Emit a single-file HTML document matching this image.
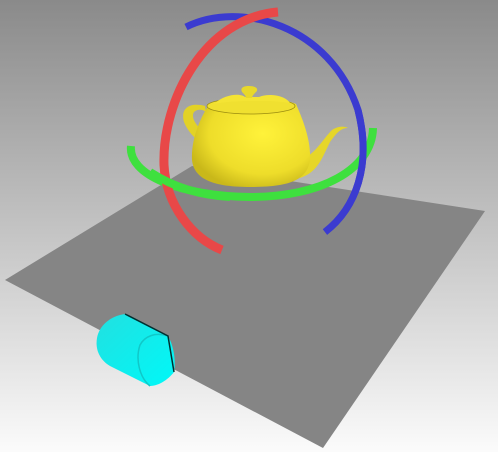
<!DOCTYPE html>
<html><head><style>
html,body{margin:0;padding:0;width:498px;height:452px;overflow:hidden}
</style></head><body>
<svg width="498" height="452" viewBox="0 0 498 452" xmlns="http://www.w3.org/2000/svg">
<defs>
<linearGradient id="bg" x1="0" y1="0" x2="0" y2="1">
<stop offset="0" stop-color="#8a8a8a"/><stop offset="1" stop-color="#fbfbfb"/>
</linearGradient>
<radialGradient id="tp" cx="0.6" cy="0.4" r="0.65">
<stop offset="0" stop-color="#fff23a"/><stop offset="0.7" stop-color="#eedd2a"/><stop offset="1" stop-color="#c9b81a"/>
</radialGradient>
<linearGradient id="cy" x1="0" y1="0" x2="1" y2="1">
<stop offset="0" stop-color="#22e0e0"/><stop offset="1" stop-color="#00f8f8"/>
</linearGradient>
</defs>
<rect width="498" height="452" fill="url(#bg)"/>
<polygon points="5,280 192,166 485,211 323,448" fill="#858585"/>
<!-- blue ring -->
<path d="M186 27 C240 0 330 25 358 110 C372 165 356 208 325 232" fill="none" stroke="#3b3bd0" stroke-width="7"/>
<!-- teapot -->
<path d="M205 106 C190 102 180 108 184 122 C188 132 196 140 202 143 L206 134 C198 128 190 118 194 112 C198 108 204 110 206 112 Z" fill="#e2d226"/>
<path d="M300 160 C315 155 322 140 332 130 C338 126 344 126 348 128 C340 128 336 134 330 142 C322 158 318 172 300 178 Z" fill="#e6d628"/>
<path d="M208 106 C198 122 191 142 192 160 C194 180 215 187 250 187 C290 187 307 180 310 160 C311 140 303 120 296 104 C280 96 225 96 208 106 Z" fill="url(#tp)"/>
<ellipse cx="251" cy="106" rx="44" ry="8" fill="#f0e030" stroke="#9a8c10" stroke-width="0.8"/>
<path d="M214 104 C225 94 240 93 245 97 L259 97 C268 93 285 95 290 103 C275 100 230 100 214 104 Z" fill="#f4e434"/>
<path d="M242 92 C240 88 243 86 249 86 C256 86 259 89 256 92 C254 94 252 96 252 98 L246 98 C246 96 244 94 242 92 Z" fill="#e8d82a"/>
<!-- green ring -->
<path d="M131 146 C128 175 180 196 250 197 C320 197 372 170 373 128" fill="none" stroke="#3ee03e" stroke-width="8"/>
<!-- red ring -->
<path d="M278 12 C205 18 162 100 164 165 C166 205 192 238 222 250" fill="none" stroke="#e84848" stroke-width="9"/>
<!-- green over red -->
<path d="M150 172 C175 188 200 195 230 197" fill="none" stroke="#3ee03e" stroke-width="8"/>
<!-- blue over green on right -->
<path d="M358 110 C372 165 356 208 325 232" fill="none" stroke="#3b3bd0" stroke-width="7"/>
<!-- cylinder -->
<path d="M125 314 L168 336 C174 346 176 362 174 372 C168 380 158 386 150 386 L110 366 C100 360 95 350 97 338 C99 326 110 316 125 314 Z" fill="url(#cy)"/>
<path d="M150 386 C140 378 135 360 140 345 C145 336 155 332 168 336" fill="none" stroke="#10c8c8" stroke-width="1.5"/>
<path d="M125 314 L168 336 L174 372" fill="none" stroke="#003030" stroke-width="1.5"/>
</svg>
</body></html>
